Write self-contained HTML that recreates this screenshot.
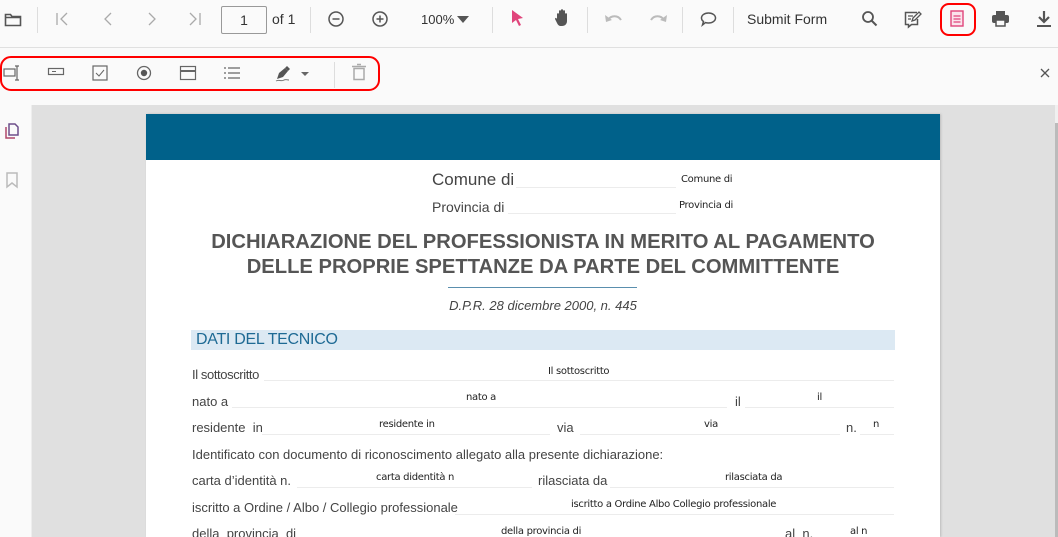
<!DOCTYPE html>
<html><head><meta charset="utf-8"><style>
*{margin:0;padding:0;box-sizing:border-box}
html,body{width:1058px;height:537px;overflow:hidden}
body{background:#fafafa;font-family:"Liberation Sans",Arial,sans-serif;position:relative}
.a{position:absolute}
.sep{position:absolute;width:1px;background:#ddd}
svg{position:absolute;overflow:visible}
.lbl{position:absolute;font-size:13px;color:#444;white-space:nowrap}
.ph{position:absolute;font-size:10px;color:#222;white-space:nowrap;font-family:"DejaVu Sans","Liberation Sans",sans-serif;letter-spacing:-0.3px}
.ln{position:absolute;height:1px;background:#ececec}
</style></head><body>
<!-- toolbar 1 -->
<div class="a" style="left:0;top:0;width:1058px;height:48px;background:#fafafa;border-bottom:1px solid #e0e0e0"></div>
<svg style="left:4px;top:11px" width="18" height="18" viewBox="0 0 18 18"><path d="M1.5 3.5h5l1.5 2h8.5v9h-15z M1.5 6.5h15" fill="none" stroke="#555" stroke-width="1.6"/></svg>
<div class="sep" style="left:37px;top:7px;height:26px"></div>
<svg style="left:55px;top:11px" width="16" height="16"><path d="M2 2v12M12 2l-6 6 6 6" fill="none" stroke="#aaa" stroke-width="1.3"/></svg>
<svg style="left:100px;top:11px" width="16" height="16"><path d="M11 2l-6 6 6 6" fill="none" stroke="#aaa" stroke-width="1.3"/></svg>
<svg style="left:144px;top:11px" width="16" height="16"><path d="M5 2l6 6-6 6" fill="none" stroke="#aaa" stroke-width="1.3"/></svg>
<svg style="left:187px;top:11px" width="16" height="16"><path d="M3 2l6 6-6 6M13 2v12" fill="none" stroke="#aaa" stroke-width="1.3"/></svg>
<div class="a" style="left:221px;top:6px;width:46px;height:28px;border:1px solid #999;border-radius:2px;font-size:14px;text-align:center;line-height:26px;color:#333">1</div>
<div class="a" style="left:272px;top:11px;font-size:14px;color:#333">of 1</div>
<div class="sep" style="left:310px;top:7px;height:26px"></div>
<svg style="left:328px;top:11px" width="17" height="17"><circle cx="8" cy="8" r="7" fill="none" stroke="#555" stroke-width="1.5"/><path d="M4.5 8h7" stroke="#555" stroke-width="1.5"/></svg>
<svg style="left:372px;top:11px" width="17" height="17"><circle cx="8" cy="8" r="7" fill="none" stroke="#555" stroke-width="1.5"/><path d="M4.5 8h7M8 4.5v7" stroke="#555" stroke-width="1.5"/></svg>
<div class="a" style="left:421px;top:12px;font-size:13px;color:#333">100%</div>
<svg style="left:457px;top:16px" width="12" height="8"><path d="M0 0h12L6 7z" fill="#555"/></svg>
<div class="sep" style="left:492px;top:7px;height:26px"></div>
<svg style="left:510px;top:9px" width="16" height="20"><path d="M2 1l11 8-5 1 3 6-2 1-3-6-4 3z" fill="#e0457b"/></svg>
<svg style="left:554px;top:9px" width="17" height="19"><path d="M3 10V5c0-1 2-1 2 0v-3c0-1 2-1 2 0v-1c0-1 2-1 2 0v1c0-1 2-1 2 0v3c0-1 2-1 2 0v7c0 3-2 5-5 5h-1c-2 0-3-1-4-3L1 10c0-1 1-2 2 0z" fill="#555"/></svg>
<div class="sep" style="left:587px;top:7px;height:26px"></div>
<svg style="left:605px;top:13px" width="18" height="12"><path d="M3 7c3-5 10-5 13 0" fill="none" stroke="#bbb" stroke-width="2"/><path d="M0 2l1 7 6-2z" fill="#bbb"/></svg>
<svg style="left:649px;top:13px" width="18" height="12"><path d="M2 7c3-5 10-5 13 0" fill="none" stroke="#bbb" stroke-width="2"/><path d="M18 2l-1 7-6-2z" fill="#bbb"/></svg>
<div class="sep" style="left:682px;top:7px;height:26px"></div>
<svg style="left:700px;top:11px" width="17" height="17"><path d="M8.5 2c4 0 7 2.2 7 5s-3 5-7 5c-1 0-2 0-3-.4L2.5 14l1-3.5C2 9.5 1.5 8.3 1.5 7c0-2.8 3-5 7-5z" fill="none" stroke="#555" stroke-width="1.5"/></svg>
<div class="sep" style="left:733px;top:7px;height:26px"></div>
<div class="a" style="left:747px;top:11px;font-size:14px;color:#333">Submit Form</div>
<svg style="left:861px;top:10px" width="17" height="17"><circle cx="7" cy="7" r="5" fill="none" stroke="#555" stroke-width="1.8"/><path d="M10.5 10.5l5 5" stroke="#555" stroke-width="2"/></svg>
<svg style="left:904px;top:10px" width="18" height="18"><path d="M13 2.5H1.5v12h3v2.5l3-2.5h6V9" fill="none" stroke="#555" stroke-width="1.5"/><path d="M4 6h5M4 9h3M8 11l1-3 6-6 2 2-6 6z" fill="none" stroke="#555" stroke-width="1.3"/></svg>
<div class="a" style="left:940px;top:3px;width:36px;height:33px;border:2.5px solid #f00;border-radius:9px"></div>
<svg style="left:950px;top:10px" width="14" height="17"><rect x="1" y="1" width="12" height="15" fill="#fbe4ec" stroke="#e0457b" stroke-width="1.4"/><path d="M3.5 6h7M3.5 9h7M3.5 12h7" stroke="#e0457b" stroke-width="1.2"/></svg>
<svg style="left:991px;top:10px" width="19" height="17"><rect x="5" y="1" width="9" height="4" fill="#555"/><rect x="1" y="5" width="17" height="8" rx="2" fill="#555"/><rect x="5" y="10" width="9" height="6" fill="#fafafa" stroke="#555" stroke-width="1.5"/></svg>
<svg style="left:1036px;top:10px" width="16" height="18"><path d="M8 1v10M3 7l5 5 5-5" fill="none" stroke="#555" stroke-width="2.2"/><path d="M1 16h14" stroke="#555" stroke-width="2"/></svg>
<!-- toolbar 2 -->
<div class="a" style="left:0;top:49px;width:1058px;height:56px;background:#fafafa"></div>
<div class="a" style="left:0;top:56px;width:380px;height:35px;border:2.5px solid #f00;border-radius:11px"></div>
<svg style="left:3px;top:65px" width="18" height="16"><rect x="1" y="4" width="11" height="7" fill="none" stroke="#666" stroke-width="1.2"/><path d="M14 1v14M12 1h4M12 15h4" stroke="#666" stroke-width="1.2"/></svg>
<svg style="left:48px;top:68px" width="16" height="8"><rect x="0.5" y="0.5" width="15" height="6" fill="none" stroke="#666" stroke-width="1.2"/><path d="M4 3.5h4" stroke="#666"/></svg>
<svg style="left:92px;top:65px" width="16" height="16"><rect x="1" y="1" width="14" height="14" fill="none" stroke="#666" stroke-width="1.2"/><path d="M4 8l3 3 5-6" fill="none" stroke="#666" stroke-width="1"/></svg>
<svg style="left:136px;top:65px" width="16" height="16"><circle cx="8" cy="8" r="6.5" fill="none" stroke="#666" stroke-width="1.3"/><circle cx="8" cy="8" r="3.2" fill="#555"/></svg>
<svg style="left:180px;top:66px" width="16" height="14"><rect x="0.5" y="0.5" width="15" height="13" fill="none" stroke="#666" stroke-width="1.2"/><path d="M0.5 5h15" stroke="#666" stroke-width="2"/></svg>
<svg style="left:224px;top:67px" width="16" height="12"><path d="M0 1h2M4 1h12M0 6h2M4 6h12M0 11h2M4 11h12" stroke="#666" stroke-width="1.3"/></svg>
<svg style="left:275px;top:65px" width="20" height="18"><path d="M2 14l2-6 6-5 3 3-5 6z" fill="#555"/><path d="M10 3l2-2 3 3-2 2" fill="#555"/><path d="M1 16c3-2 5 1 8-1 2-1 3 0 5 0" fill="none" stroke="#777" stroke-width="1"/></svg>
<svg style="left:301px;top:72px" width="8" height="5"><path d="M0 0h8L4 4z" fill="#666"/></svg>
<div class="sep" style="left:334px;top:62px;height:26px"></div>
<svg style="left:352px;top:64px" width="14" height="17"><path d="M0 2.5h14M5 0.5h4" stroke="#aaa" stroke-width="1.5"/><rect x="2" y="4.5" width="10" height="11" fill="none" stroke="#aaa" stroke-width="1.5"/></svg>
<svg style="left:1040px;top:68px" width="10" height="10"><path d="M1 1l8 8M9 1l-8 8" stroke="#555" stroke-width="1.3"/></svg>
<!-- viewer -->
<div class="a" style="left:0;top:105px;width:32px;height:432px;background:#fafafa;border-right:1px solid #eee"></div>
<svg style="left:5px;top:123px" width="14" height="16"><path d="M4 1h6l3 3v8H4z" fill="none" stroke="#6c4e8a" stroke-width="1.5"/><path d="M1 4v11h9" fill="none" stroke="#b0486a" stroke-width="1.5"/></svg>
<svg style="left:6px;top:172px" width="12" height="16"><path d="M1 1h10v14l-5-4-5 4z" fill="none" stroke="#bbb" stroke-width="1.5"/></svg>
<div class="a" style="left:32px;top:105px;width:1026px;height:432px;background:#e0e0e0"></div>
<div class="a" style="left:1055px;top:105px;width:3px;height:432px;background:#f0f0f0"></div>
<div class="a" style="left:1055px;top:123px;width:3px;height:414px;background:#bbb"></div>
<!-- page -->
<div class="a" style="left:146px;top:114px;width:794px;height:423px;background:#fff;box-shadow:1px 0 2px #bbb"></div>
<div class="a" style="left:146px;top:114px;width:794px;height:46px;background:#00618a"></div>
<div class="lbl" style="left:432px;top:170px;font-size:17px;color:#444">Comune di</div>
<div class="ln" style="left:516px;top:187px;width:160px"></div>
<div class="ph" style="left:681px;top:174px">Comune di</div>
<div class="lbl" style="left:432px;top:199px;font-size:14px;color:#444">Provincia di</div>
<div class="ln" style="left:508px;top:213px;width:168px"></div>
<div class="ph" style="left:679px;top:200px">Provincia di</div>
<div class="a" style="left:140px;top:230px;width:806px;text-align:center;font-size:20.2px;font-weight:bold;color:#555;line-height:25px;white-space:nowrap">DICHIARAZIONE DEL PROFESSIONISTA IN MERITO AL PAGAMENTO<br>DELLE PROPRIE SPETTANZE DA PARTE DEL COMMITTENTE</div>
<div class="a" style="left:448px;top:287px;width:189px;height:1px;background:#5a8fae"></div>
<div class="a" style="left:146px;top:298px;width:794px;text-align:center;font-size:13px;font-style:italic;color:#444">D.P.R. 28 dicembre 2000, n. 445</div>
<div class="a" style="left:191px;top:330px;width:704px;height:20px;background:#dce9f3"></div>
<div class="a" style="left:196px;top:331px;font-size:16px;color:#1e6a94;letter-spacing:-0.3px">DATI DEL TECNICO</div>
<div class="lbl" style="left:192px;top:367px;letter-spacing:-0.4px">Il sottoscritto</div><div class="ln" style="left:264px;top:380px;width:630px"></div><div class="ph" style="left:548px;top:366px">Il sottoscritto</div>
<div class="lbl" style="left:192px;top:394px">nato a</div><div class="ln" style="left:232px;top:407px;width:495px"></div><div class="ph" style="left:466px;top:392px">nato a</div>
<div class="lbl" style="left:735px;top:394px">il</div><div class="ln" style="left:745px;top:407px;width:149px"></div><div class="ph" style="left:817px;top:392px">il</div>
<div class="lbl" style="left:192px;top:420px">residente &nbsp;in</div><div class="ln" style="left:262px;top:434px;width:288px"></div><div class="ph" style="left:379px;top:419px">residente in</div>
<div class="lbl" style="left:557px;top:420px">via</div><div class="ln" style="left:580px;top:434px;width:260px"></div><div class="ph" style="left:704px;top:419px">via</div>
<div class="lbl" style="left:846px;top:420px">n.</div><div class="ln" style="left:860px;top:434px;width:34px"></div><div class="ph" style="left:873px;top:419px">n</div>
<div class="lbl" style="left:192px;top:447px">Identificato con documento di riconoscimento allegato alla presente dichiarazione:</div>
<div class="lbl" style="left:192px;top:473px">carta d’identità n.</div><div class="ln" style="left:297px;top:487px;width:235px"></div><div class="ph" style="left:376px;top:472px">carta didentità n</div>
<div class="lbl" style="left:538px;top:473px">rilasciata da</div><div class="ln" style="left:610px;top:487px;width:284px"></div><div class="ph" style="left:725px;top:472px">rilasciata da</div>
<div class="lbl" style="left:192px;top:500px">iscritto a Ordine / Albo / Collegio professionale</div><div class="ln" style="left:455px;top:514px;width:439px"></div><div class="ph" style="left:571px;top:499px">iscritto a Ordine Albo Collegio professionale</div>
<div class="lbl" style="left:192px;top:526px">della &nbsp;provincia &nbsp;di</div><div class="ph" style="left:501px;top:526px">della provincia di</div>
<div class="lbl" style="left:785px;top:526px">al &nbsp;n.</div><div class="ph" style="left:850px;top:526px">al n</div>
</body></html>
